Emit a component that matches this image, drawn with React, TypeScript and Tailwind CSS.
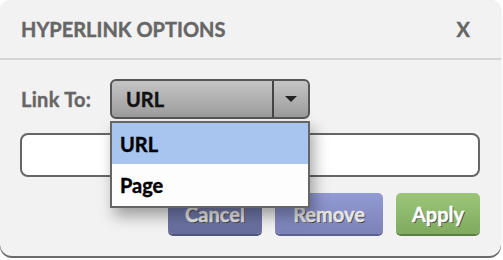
import React from 'react';

const font = { fontFamily: "Lato, 'Open Sans', sans-serif" };

export default function App() {
    return (
        <div className="w-[503px] h-[260px] bg-white [-webkit-text-stroke:0.4px_currentColor]" style={font}>
            <div className="relative w-[501px] h-[256px] bg-[#f2f2f2] rounded-[12px] shadow-[0_2px_0_#6b6b6b,0_0_2px_rgba(0,0,0,0.15)]">
                {/* Header */}
                <div className="flex items-center justify-between h-[60px] px-[21px] border-b-2 border-[#d4d4d4]">
                    <span className="text-[20px] font-bold text-[#666]">HYPERLINK OPTIONS</span>
                    <span className="text-[20px] font-bold text-[#666] mr-[10px]">X</span>
                </div>

                {/* Body */}
                <div className="px-[20px] pt-[19px]">
                    <div className="flex items-center">
                        <span className="w-[90px] pl-[1px] text-[20px] font-bold text-[#666] tracking-[0.3px]">Link To:</span>
                        <div className="relative">
                            <div className="flex w-[200px] h-[40px] rounded-[6px] border-2 border-[#555] bg-gradient-to-b from-[#c4c4c4] to-[#9c9c9c] overflow-hidden">
                                <div className="flex-1 flex items-center pl-[14px] text-[20px] font-bold text-[#111]">URL</div>
                                <div className="w-[36px] border-l-2 border-[#444] flex items-center justify-center">
                                    <svg width="14" height="8" viewBox="0 0 14 8">
                                        <path d="M1 1 H13 L7 7 Z" fill="#222" />
                                    </svg>
                                </div>
                            </div>
                            {/* Dropdown menu */}
                            <div className="absolute left-0 top-[42px] z-10 w-[200px] border-2 border-[#666] bg-white shadow-[4px_8px_14px_rgba(0,0,0,0.35)]">
                                <div className="h-[41px] flex items-center pl-[8px] bg-[#a8c5ef] text-[20px] font-bold text-black">URL</div>
                                <div className="h-[42px] flex items-center pl-[8px] bg-[#fdfdfd] text-[20px] font-bold text-black">Page</div>
                            </div>
                        </div>
                    </div>

                    <div className="mt-[14px] h-[44px] w-[460px] rounded-[8px] border-2 border-[#666] bg-white" />

                    <div className="flex justify-end gap-[13px] mt-[16px] mr-[1px]">
                        <button className="w-[94px] h-[41px] rounded-[5px] bg-gradient-to-b from-[#7c83b6] to-[#666c9c] shadow-[0_2px_0_#50557a] text-[20px] font-bold text-[#e6e6e6] [text-shadow:1px_1px_0_#444]">Cancel</button>
                        <button className="w-[108px] h-[41px] rounded-[5px] bg-gradient-to-b from-[#939bd3] to-[#7a82b8] shadow-[0_2px_0_#5a6090] text-[20px] font-bold text-[#e6e6e6] [text-shadow:1px_1px_0_#444]">Remove</button>
                        <button className="w-[84px] h-[41px] rounded-[5px] bg-gradient-to-b from-[#9cc57a] to-[#80ab5e] shadow-[0_2px_0_#5d7f44] text-[20px] font-bold text-white [text-shadow:1px_1px_0_#444]">Apply</button>
                    </div>
                </div>
            </div>
        </div>
    );
}
